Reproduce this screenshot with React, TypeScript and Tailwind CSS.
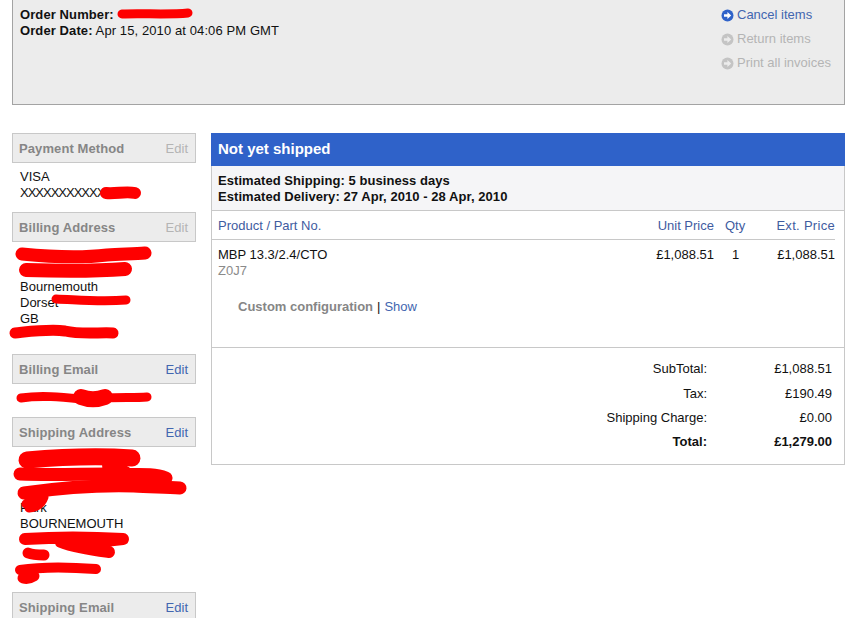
const Arrow = ({ active }: { active?: boolean }) => (
    <svg width="13" height="13" viewBox="0 0 13 13" className="shrink-0">
        <circle cx="6.5" cy="6.5" r="6" fill={active ? '#2f62c9' : '#c4c4c4'} />
        <path d="M3 5.3h3.4V3l3.8 3.5L6.4 10V7.7H3z" fill={active ? '#ffffff' : '#ececec'} />
    </svg>
);

const SideHeader = ({ title, disabled, className = '' }: { title: string; disabled?: boolean; className?: string }) => (
    <div className={`flex h-[30px] items-center justify-between border border-[#c8c8c8] bg-[#ececec] pl-[6px] pr-[7px] pt-[2px] ${className}`}>
        <span className="font-bold tracking-[0.1px] text-[#868686]">{title}</span>
        <span className={disabled ? 'text-[#b4b4b4]' : 'text-[#4266b0]'}>Edit</span>
    </div>
);

const Total = ({ label, value, bold }: { label: string; value: string; bold?: boolean }) => (
    <div className={`flex h-[24.4px] items-center justify-end ${bold ? 'font-bold' : ''}`}>
        <span>{label}</span>
        <span className="ml-[40px] w-[85px] text-right">{value}</span>
    </div>
);

export default function App() {
    return (
        <div className="relative h-[618px] overflow-hidden bg-white pl-[12px] font-['Liberation_Sans',Arial,sans-serif] text-[13px] leading-[16px] text-[#111]">
            <div className="flex h-[105px] w-[833px] justify-between border-x border-b border-[#a3a3a3] bg-[#ececec] pl-[7px] pr-[13px] pt-[7px]">
                <div className="tracking-[0.1px]">
                    <div><b>Order Number:</b></div>
                    <div><b>Order Date:</b> Apr 15, 2010 at 04:06 PM GMT</div>
                </div>
                <div className="flex w-[110px] flex-col gap-[8px]">
                    <div className="flex items-center gap-[3px] text-[#4266b0]"><Arrow active />Cancel items</div>
                    <div className="flex items-center gap-[3px] text-[#b4b4b4]"><Arrow />Return items</div>
                    <div className="flex items-center gap-[3px] whitespace-nowrap text-[#b4b4b4]"><Arrow />Print all invoices</div>
                </div>
            </div>

            <div className="mt-[28px] flex items-start gap-[15px]">
                <div className="w-[184px] shrink-0">
                    <SideHeader title="Payment Method" disabled />
                    <div className="pl-[8px] pt-[6px]">
                        <div>VISA</div>
                        <div className="tracking-[-1px]">XXXXXXXXXXXX</div>
                    </div>
                    <SideHeader title="Billing Address" disabled className="mt-[11px]" />
                    <div className="pl-[8px] pt-[5px]">
                        <div className="h-[16px]" />
                        <div className="h-[16px]" />
                        <div>Bournemouth</div>
                        <div>Dorset</div>
                        <div>GB</div>
                        <div className="h-[16px]" />
                    </div>
                    <SideHeader title="Billing Email" className="mt-[11px]" />
                    <div className="h-[33px]" />
                    <SideHeader title="Shipping Address" />
                    <div className="pl-[8px] pt-[5px]">
                        <div className="h-[16px]" />
                        <div className="h-[16px]" />
                        <div className="h-[16px]" />
                        <div>Park</div>
                        <div>BOURNEMOUTH</div>
                        <div className="h-[48px]" />
                    </div>
                    <SideHeader title="Shipping Email" className="mt-[12px]" />
                </div>

                <div className="w-[634px] shrink-0 border-x border-b border-[#c8c8c8]">
                    <div className="-mx-px flex h-[33px] items-center bg-[#2f62c9] pb-[2px] pl-[7px] text-[15px] font-bold text-white">Not yet shipped</div>
                    <div className="h-[45px] border-b border-[#c8c8c8] bg-[#f5f5f7] pl-[6px] pt-[7px] font-bold tracking-[0.06px]">
                        <div>Estimated Shipping: 5 business days</div>
                        <div>Estimated Delivery: 27 Apr, 2010 - 28 Apr, 2010</div>
                    </div>
                    <div className="mr-[9px]">
                        <div className="flex h-[29px] items-center border-b border-[#c8c8c8] pl-[6px] pt-[2px] text-[#3f5c9f]">
                            <span className="flex-1">Product / Part No.</span>
                            <span className="w-[70px] text-right">Unit Price</span>
                            <span className="ml-[11px] w-[21px]">Qty</span>
                            <span className="w-[89px] text-right tracking-[0.3px]">Ext. Price</span>
                        </div>
                        <div className="flex pl-[6px] pt-[7px]">
                            <div className="flex-1">
                                <div>MBP 13.3/2.4/CTO</div>
                                <div className="text-[#8a8a8a]">Z0J7</div>
                            </div>
                            <span className="w-[70px] text-right">£1,088.51</span>
                            <span className="ml-[11px] w-[21px] pl-[7px]">1</span>
                            <span className="w-[89px] text-right">£1,088.51</span>
                        </div>
                    </div>
                    <div className="h-[69px] border-b border-[#c8c8c8] pl-[26px] pt-[20px]">
                        <b className="text-[#868686]">Custom configuration</b>
                        <span className="mx-[4px]">|</span>
                        <span className="text-[#4266b0]">Show</span>
                    </div>
                    <div className="pb-[9px] pr-[12px] pt-[9px]">
                        <Total label="SubTotal:" value="£1,088.51" />
                        <Total label="Tax:" value="£190.49" />
                        <Total label="Shipping Charge:" value="£0.00" />
                        <Total label="Total:" value="£1,279.00" bold />
                    </div>
                </div>
            </div>

            {/* hand drawn redactions over the personal details */}
            <svg width="855" height="618" viewBox="0 0 855 618" className="pointer-events-none absolute left-0 top-0" fill="none" stroke="#fe0000" strokeLinecap="round" strokeLinejoin="round">
                <path d="M122 14c20-1 45 1 66-1" strokeWidth="9" />
                <path d="M106 193c10 1 20-2 29 0" strokeWidth="12" />
                <path d="M22 254c30 3 60 4 85 1 15-1 28-1 38-2" strokeWidth="13" />
                <path d="M26 270c30 1 60 2 99-1" strokeWidth="14" />
                <path d="M56 299c25 1 45 3 70 1" strokeWidth="9" />
                <path d="M15 333c20-2 35-4 50-2 18 4 35 1 48 2" strokeWidth="11" />
                <path d="M21 398c20-3 40-1 60 1 12 3 16 3 24-1 15-1 30 0 42-1" strokeWidth="9" />
                <path d="M81 397c8 3 16 3 24 0" strokeWidth="16" />
                <path d="M27 460c35-3 75-4 105-2" strokeWidth="17" />
                <path d="M20 474c30 1 60 0 90 0 20 2 40-2 56 4" strokeWidth="13" />
                <path d="M110 466l15 8" strokeWidth="16" />
                <path d="M24 493c35-5 75-8 110-7 15 1 30 1 46 2" strokeWidth="13" />
                <path d="M26 504c5-6 12-7 18-7-2 6-6 10-15 11" strokeWidth="9" />
                <path d="M25 539c30-2 65-2 98 0-25 3-45 4-62 3 15 6 32 8 48 10" strokeWidth="12" />
                <path d="M28 553c5 2 13 2 16 2" strokeWidth="11" />
                <path d="M20 570c25-4 50-3 76-1" strokeWidth="10" />
                <path d="M23 578c4 1 8 0 11-2" strokeWidth="11" />
            </svg>
        </div>
    );
}
